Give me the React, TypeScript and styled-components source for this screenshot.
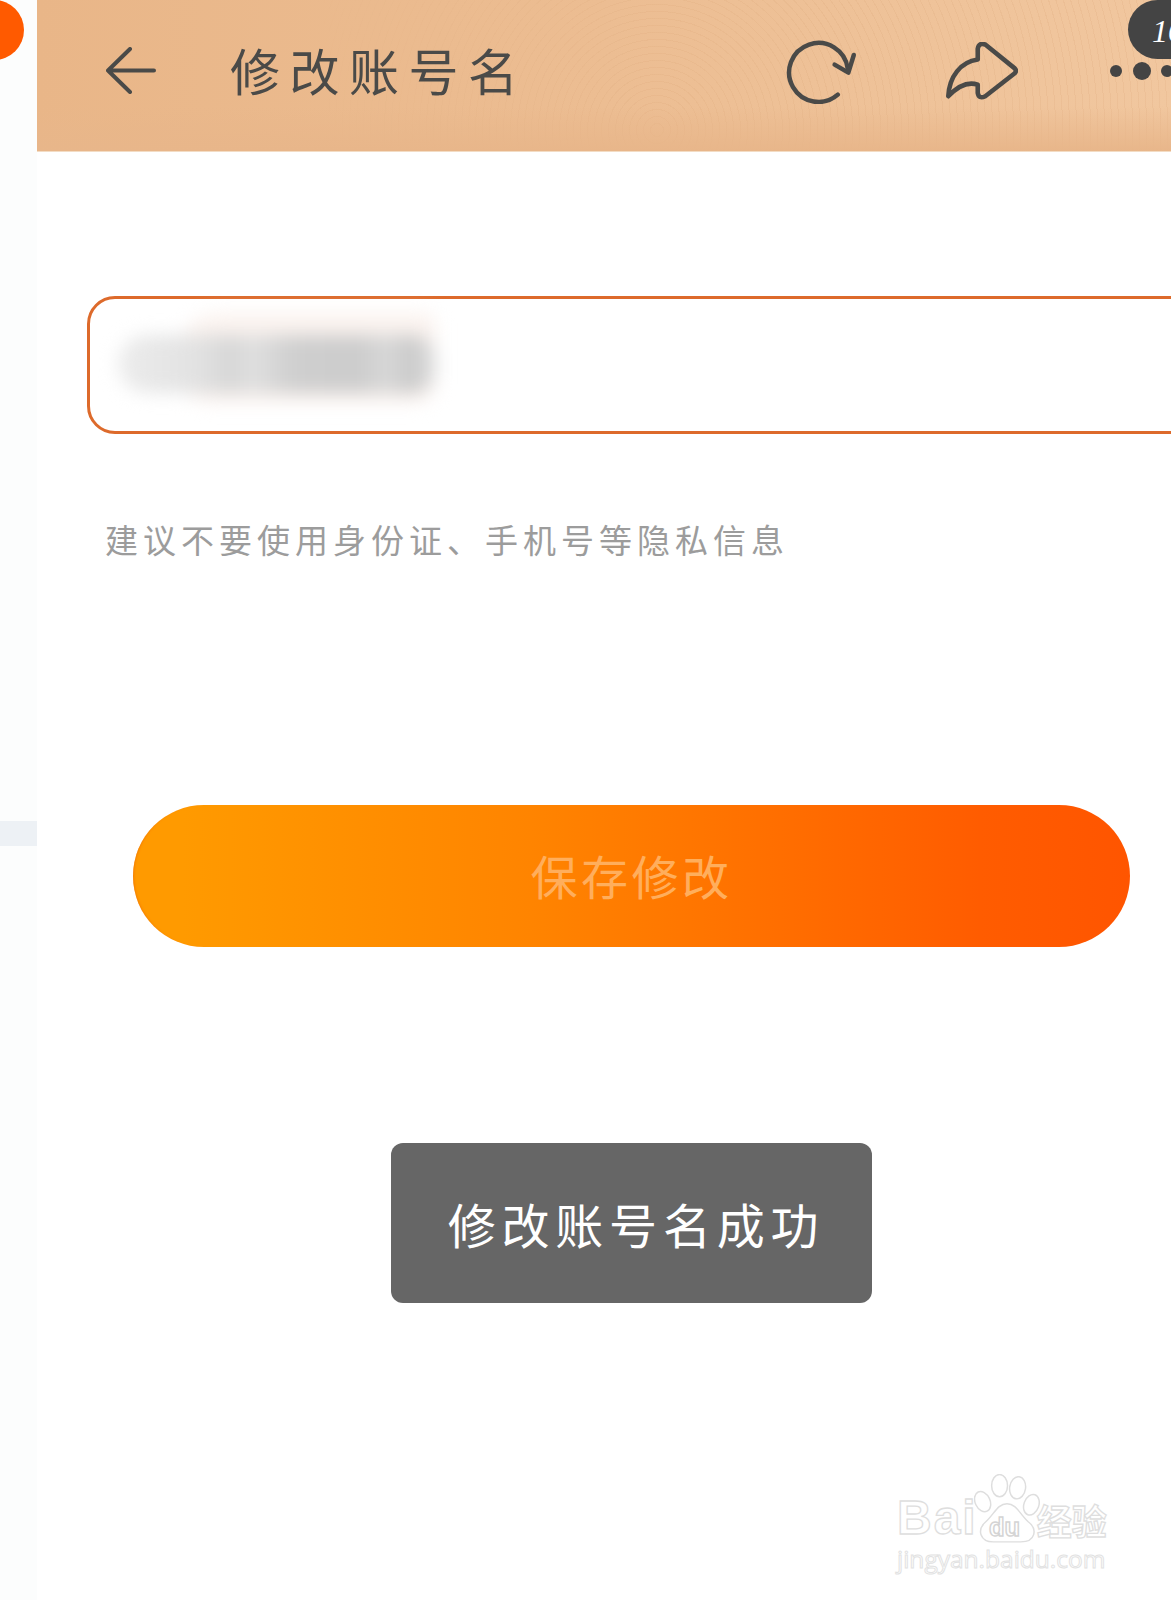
import React from "react";
import styled, { createGlobalStyle } from "styled-components";

const CJK = `"Noto Sans CJK SC", "Noto Sans", sans-serif`;

const Global = createGlobalStyle`
  html, body { margin: 0; padding: 0; background: #fff; }
`;

const Page = styled.div`
  position: relative;
  display: flex;
  width: 1171px;
  height: 1600px;
  overflow: hidden;
  background: #fff;
  font-family: ${CJK};
`;

const Rail = styled.aside`
  flex: 0 0 37px;
  padding-top: 821px;
  background: #fcfdfd;
`;

const RailMark = styled.div`
  height: 25px;
  background: #edf1f5;
`;

const Dot = styled.div`
  position: absolute;
  left: -36px;
  top: 0;
  width: 60px;
  height: 60px;
  border-radius: 50%;
  background: #ff5a00;
`;

const Main = styled.main`
  flex: 1;
  min-width: 0;
  display: flex;
  flex-direction: column;
  align-items: flex-start;
`;

const Header = styled.header`
  position: relative;
  align-self: stretch;
  flex: 0 0 152px;
  box-sizing: border-box;
  display: flex;
  align-items: center;
  overflow: hidden;
  padding: 0 0 10px 69px;
  background: linear-gradient(90deg, #e9b688 0%, #ecbd92 50%, #f1c79f 100%);
  border-bottom: 1px solid #f3dcc4;

  &::before {
    content: "";
    position: absolute;
    inset: 0;
    background:
      repeating-radial-gradient(circle at 620px 130px, rgba(255,255,255,0) 0 6px, rgba(222,170,125,.22) 6px 7px);
    -webkit-mask-image: linear-gradient(90deg, transparent 25%, #000 55%, #000 100%);
    mask-image: linear-gradient(90deg, transparent 25%, #000 55%, #000 100%);
    pointer-events: none;
  }
  &::after {
    content: "";
    position: absolute;
    left: 0; right: 0; bottom: 0;
    height: 45px;
    background: linear-gradient(180deg, rgba(232,182,138,0), #e8b68a);
    pointer-events: none;
  }
`;

const IconSvg = styled.svg`
  position: relative;
  z-index: 1;
  flex: none;
  display: block;
  fill: none;
  stroke: #4a4a48;
  stroke-linecap: round;
  stroke-linejoin: round;
`;

const Title = styled.h1`
  position: relative;
  z-index: 1;
  margin: -3px 0 0 74px;
  font-size: 50px;
  line-height: 60px;
  font-weight: 400;
  letter-spacing: 9.5px;
  color: #4a4a48;
  white-space: nowrap;
`;

const Actions = styled.div`
  position: relative;
  z-index: 1;
  flex: none;
  margin: 0 -2px 0 auto;
  display: flex;
  align-items: center;
  gap: 89px;
`;

const MoreDots = styled.div`
  display: flex;
  align-items: center;
  gap: 10.5px;
  margin-left: 3px;
`;

const MoreDot = styled.span<{ $size: number }>`
  width: ${(p) => p.$size}px;
  height: ${(p) => p.$size}px;
  border-radius: 50%;
  background: #444;
`;

const Badge = styled.div`
  position: absolute;
  z-index: 2;
  top: 0;
  left: 1128px;
  width: 80px;
  height: 59px;
  box-sizing: border-box;
  padding-left: 24px;
  border-radius: 30px 0 0 30px;
  background: #444;
  color: #fff;
  font: italic 32px/62px "Liberation Serif", serif;
`;

const NameField = styled.div`
  flex: none;
  margin: 144px 0 0 50px;
  width: 1200px;
  height: 138px;
  box-sizing: border-box;
  display: flex;
  align-items: center;
  padding-left: 28px;
  border: 3px solid #dd6a2b;
  border-radius: 28px;
`;

const Blurred = styled.div`
  position: relative;
  width: 318px;
  height: 58px;
  margin-top: -2px;
  filter: blur(9px);

  &::before {
    content: "";
    position: absolute;
    left: 60px;
    right: 0;
    top: -22px;
    height: 90px;
    border-radius: 40px 10px 20px 30px;
    background: #fbf3ef;
  }
  &::after {
    content: "";
    position: absolute;
    inset: 0;
    border-radius: 30px 24px 24px 30px;
    background: linear-gradient(90deg, #ececec 0%, #e2e2e2 25%, #d6d6d6 36%, #e0e0e0 42%, #cfcfcf 55%, #cccccc 75%, #d8d8d8 85%, #c9c9c9 92%, #e0e0e0 100%);
  }
`;

const Hint = styled.p`
  margin: 80px 0 0 68px;
  font-size: 33px;
  line-height: 50px;
  font-weight: 400;
  letter-spacing: 5px;
  color: #9c9c9c;
  white-space: nowrap;
`;

const SaveButton = styled.button`
  flex: none;
  margin: 241px 0 0 96px;
  width: 997px;
  height: 142px;
  border: 0;
  padding: 0 0 4px;
  border-radius: 71px;
  background: linear-gradient(90deg, #ff9a00 5%, #ff8400 40%, #ff6e00 65%, #ff5c00 85%, #ff5500 100%);
  box-shadow: inset 3px 0 3px -3px #e85f00;
  color: #ffae5c;
  font-family: ${CJK};
  font-size: 47px;
  font-weight: 400;
  letter-spacing: 3.5px;
`;

const Toast = styled.div`
  flex: none;
  margin: 196px 0 0 354px;
  width: 481px;
  height: 160px;
  box-sizing: border-box;
  padding-left: 9px;
  display: flex;
  align-items: center;
  justify-content: center;
  border-radius: 12px;
  background: #666;
  color: #fff;
  font-size: 48px;
  letter-spacing: 5.8px;
  white-space: nowrap;
`;

const Watermark = styled.div`
  position: absolute;
  left: 897px;
  top: 1467px;
  width: 215px;
  display: flex;
  flex-direction: column;
  color: #fff;
`;

const MarkRow = styled.div`
  display: flex;
  align-items: flex-end;
  height: 78px;
`;

const MarkBai = styled.span`
  font: 700 48px/54px "Liberation Sans", sans-serif;
  letter-spacing: 2px;
  color: #fff;
  -webkit-text-stroke: 1.3px #dedede;
`;

const MarkJing = styled.span`
  font: 700 35px/50px ${CJK};
  color: #fff;
  margin-left: -3px;
  -webkit-text-stroke: 1.3px #dedede;
`;

const MarkUrl = styled.span`
  font: 400 24.5px/28px "Open Sans", sans-serif;
  color: #fff;
  -webkit-text-stroke: 1px #e2e2e2;
  white-space: nowrap;
`;

const Paw = styled.svg`
  flex: none;
  margin: 0 0 1px -4px;
  fill: #fff;
  stroke: #dedede;
  stroke-width: 1.4;
`;

const PawText = styled.text`
  font: 700 24px "Liberation Sans", sans-serif;
  fill: #fff;
  stroke: #d4d4d4;
`;

export default function App() {
  return (
    <Page>
      <Global />
      <Rail>
        <RailMark />
      </Rail>
      <Dot />
      <Main>
        <Header>
          <IconSvg width="50" height="47" viewBox="0 0 50 47" strokeWidth="4">
            <path d="M24 2 L2 23.5 L24 45 M2 23.5 H48" />
          </IconSvg>
          <Title>修改账号名</Title>
          <Actions>
            <IconSvg width="72" height="66" viewBox="130 105 225 206" strokeWidth="14">
              <path d="M295 282 A92 92 0 1 1 326 200" />
              <path d="M285 188 L328 213 L345 158" />
            </IconSvg>
            <IconSvg width="72" height="58" viewBox="615 125 220 176" strokeWidth="14">
              <path d="M622 290 C625 230 660 185 712 178 L712 145 Q715 125 735 132 L825 205 Q832 212 825 220 L735 290 Q715 300 712 280 L712 255 Q670 240 622 290 Z" />
            </IconSvg>
            <MoreDots>
              <MoreDot $size={12} />
              <MoreDot $size={18} />
              <MoreDot $size={12} />
            </MoreDots>
          </Actions>
        </Header>
        <NameField>
          <Blurred />
        </NameField>
        <Hint>建议不要使用身份证、手机号等隐私信息</Hint>
        <SaveButton>保存修改</SaveButton>
        <Toast>修改账号名成功</Toast>
      </Main>
      <Badge>16</Badge>
      <Watermark>
        <MarkRow>
          <MarkBai>Bai</MarkBai>
          <Paw width="66" height="70" viewBox="0 0 62 66">
            <ellipse cx="8" cy="26" rx="7" ry="10" transform="rotate(-25 8 26)" />
            <ellipse cx="24" cy="11" rx="7.5" ry="10.5" />
            <ellipse cx="41" cy="13" rx="7.5" ry="10.5" transform="rotate(8 41 13)" />
            <ellipse cx="54" cy="29" rx="7" ry="10" transform="rotate(20 54 29)" />
            <path d="M31 28 C22 28 19 38 11 45 C2 53 6 64 18 64 H44 C58 64 60 52 51 45 C43 38 40 28 31 28 Z" />
            <PawText x="14" y="58">du</PawText>
          </Paw>
          <MarkJing>经验</MarkJing>
        </MarkRow>
        <MarkUrl>jingyan.baidu.com</MarkUrl>
      </Watermark>
    </Page>
  );
}
